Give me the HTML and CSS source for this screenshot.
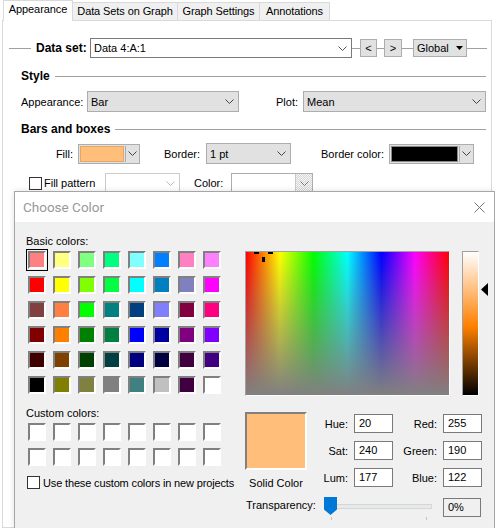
FILE: index.html
```html
<!DOCTYPE html>
<html lang="en">

<head>
    <meta charset="UTF-8">
    <title>Appearance - Choose Color</title>
    <link rel="stylesheet" href="styles.css">
</head>

<body>
    <div class="tabs">
        <div class="tab active tab-appearance">Appearance</div>
        <div class="tab tab-datasets">Data Sets on Graph</div>
        <div class="tab tab-graph">Graph Settings</div>
        <div class="tab tab-notes">Annotations</div>
    </div>

    <div class="panel">
        <div class="dataset-row">
            <span class="rule lead"></span>
            <span class="ds-label">Data set:</span>
            <div class="combo ds">
                <span>Data 4:A:1</span>
                <span class="chev"><svg width="9" height="5" viewBox="0 0 9 5"><path d="M0.5 0.5L4.5 4.5L8.5 0.5" fill="none" stroke="#555"/></svg></span>
            </div>
            <span class="rule w8"></span>
            <button class="navbtn">&lt;</button>
            <span class="rule w7"></span>
            <button class="navbtn">&gt;</button>
            <span class="rule w11"></span>
            <button class="globalbtn">Global <svg width="7" height="4" viewBox="0 0 7 4"><path d="M0 0H7L3.5 4Z" fill="#000"/></svg></button>
            <span class="rule w20"></span>
        </div>

        <div class="section-head head-style">
            <span>Style</span>
            <span class="rule fill"></span>
        </div>

        <div class="row row-appearance">
            <span class="lbl lbl-appearance">Appearance:</span>
            <div class="combo gray w152">
                <span>Bar</span>
                <span class="chev"><svg width="9" height="5" viewBox="0 0 9 5"><path d="M0.5 0.5L4.5 4.5L8.5 0.5" fill="none" stroke="#444"/></svg></span>
            </div>
            <span class="lbl lbl-plot">Plot:</span>
            <div class="combo gray w183">
                <span>Mean</span>
                <span class="chev"><svg width="9" height="5" viewBox="0 0 9 5"><path d="M0.5 0.5L4.5 4.5L8.5 0.5" fill="none" stroke="#444"/></svg></span>
            </div>
        </div>

        <div class="section-head head-bars">
            <span>Bars and boxes</span>
            <span class="rule fill"></span>
        </div>

        <div class="row row-fill">
            <span class="lbl right lbl-fill">Fill:</span>
            <div class="colorcombo w62">
                <span class="sw sw-fill"></span>
                <span class="drop"><svg width="9" height="5" viewBox="0 0 9 5"><path d="M0.5 0.5L4.5 4.5L8.5 0.5" fill="none" stroke="#444"/></svg></span>
            </div>
            <span class="lbl right lbl-border">Border:</span>
            <div class="combo gray w85">
                <span>1 pt</span>
                <span class="chev"><svg width="9" height="5" viewBox="0 0 9 5"><path d="M0.5 0.5L4.5 4.5L8.5 0.5" fill="none" stroke="#444"/></svg></span>
            </div>
            <span class="lbl right lbl-bcolor">Border color:</span>
            <div class="colorcombo w85">
                <span class="sw sw-black"></span>
                <span class="drop"><svg width="9" height="5" viewBox="0 0 9 5"><path d="M0.5 0.5L4.5 4.5L8.5 0.5" fill="none" stroke="#444"/></svg></span>
            </div>
        </div>

        <div class="row row-pattern">
            <span class="chk"></span>
            <span class="lbl lbl-pattern">Fill pattern</span>
            <div class="combo disabled w75">
                <span></span>
                <span class="chev"><svg width="9" height="5" viewBox="0 0 9 5"><path d="M0.5 0.5L4.5 4.5L8.5 0.5" fill="none" stroke="#bbb"/></svg></span>
            </div>
            <span class="lbl lbl-color">Color:</span>
            <div class="combo hatch w82">
                <span></span>
                <span class="drop-hatch"><svg width="9" height="5" viewBox="0 0 9 5"><path d="M0.5 0.5L4.5 4.5L8.5 0.5" fill="none" stroke="#777"/></svg></span>
            </div>
        </div>
    </div>

    <!-- Choose Color window over the panel -->
    <div class="dialog">
        <div class="dlg-title">
            <span>Choose Color</span>
            <svg class="close" width="11" height="11" viewBox="0 0 11 11"><path d="M0.5 0.5L10.5 10.5M10.5 0.5L0.5 10.5" stroke="#777" stroke-width="1"/></svg>
        </div>
        <div class="dlg-body">
            <div class="left-col">
                <div class="cap">Basic colors:</div>
                <div class="swatches basic">
                    <i class="selected" style="background:#ff8080"></i>
                    <i style="background:#ffff80"></i>
                    <i style="background:#80ff80"></i>
                    <i style="background:#00ff80"></i>
                    <i style="background:#80ffff"></i>
                    <i style="background:#0080ff"></i>
                    <i style="background:#ff80c0"></i>
                    <i style="background:#ff80ff"></i>

                    <i style="background:#ff0000"></i>
                    <i style="background:#ffff00"></i>
                    <i style="background:#80ff00"></i>
                    <i style="background:#00ff40"></i>
                    <i style="background:#00ffff"></i>
                    <i style="background:#0080c0"></i>
                    <i style="background:#8080c0"></i>
                    <i style="background:#ff00ff"></i>

                    <i style="background:#804040"></i>
                    <i style="background:#ff8040"></i>
                    <i style="background:#00ff00"></i>
                    <i style="background:#008080"></i>
                    <i style="background:#004080"></i>
                    <i style="background:#8080ff"></i>
                    <i style="background:#800040"></i>
                    <i style="background:#ff0080"></i>

                    <i style="background:#800000"></i>
                    <i style="background:#ff8000"></i>
                    <i style="background:#008000"></i>
                    <i style="background:#008040"></i>
                    <i style="background:#0000ff"></i>
                    <i style="background:#0000a0"></i>
                    <i style="background:#800080"></i>
                    <i style="background:#8000ff"></i>

                    <i style="background:#400000"></i>
                    <i style="background:#804000"></i>
                    <i style="background:#004000"></i>
                    <i style="background:#004040"></i>
                    <i style="background:#000080"></i>
                    <i style="background:#000040"></i>
                    <i style="background:#400040"></i>
                    <i style="background:#400080"></i>

                    <i style="background:#000000"></i>
                    <i style="background:#808000"></i>
                    <i style="background:#808040"></i>
                    <i style="background:#808080"></i>
                    <i style="background:#408080"></i>
                    <i style="background:#c0c0c0"></i>
                    <i style="background:#400040"></i>
                    <i style="background:#ffffff"></i>
                </div>

                <div class="cap cap-custom">Custom colors:</div>
                <div class="swatches custom">
                    <i></i><i></i><i></i><i></i><i></i><i></i><i></i><i></i>
                    <i></i><i></i><i></i><i></i><i></i><i></i><i></i><i></i>
                </div>

                <label class="use-custom"><span class="chk"></span>Use these custom colors in new projects</label>
            </div>

            <div class="right-col">
                <div class="picker">
                    <div class="spectrum">
                        <span class="mark m-left"></span>
                        <span class="mark m-right"></span>
                        <span class="mark m-down"></span>
                    </div>
                    <div class="lumbar"></div>
                    <svg class="lum-arrow" width="7" height="13" viewBox="0 0 7 13"><path d="M7 0V13L0 6.5Z" fill="#000"/></svg>
                </div>

                <div class="values">
                    <div class="solid">
                        <div class="solid-box"></div>
                        <div class="solid-cap">Solid Color</div>
                    </div>
                    <div class="fields">
                        <span class="flbl">Hue:</span><span class="field">20</span>
                        <span class="flbl">Red:</span><span class="field">255</span>
                        <span class="flbl">Sat:</span><span class="field">240</span>
                        <span class="flbl">Green:</span><span class="field">190</span>
                        <span class="flbl">Lum:</span><span class="field">177</span>
                        <span class="flbl">Blue:</span><span class="field">122</span>
                    </div>
                </div>

                <div class="trans-row">
                    <span class="trans-lbl">Transparency:</span>
                    <div class="slider">
                        <span class="track"></span>
                        <svg class="thumb" width="13" height="18" viewBox="0 0 13 18"><path d="M0 0H13V12.5L6.5 18L0 12.5Z" fill="#0078d7"/></svg>
                        <span class="tick t1"></span>
                        <span class="tick t2"></span>
                    </div>
                    <span class="pct">0%</span>
                </div>
            </div>
        </div>
    </div>
</body>

</html>
```

FILE: styles.css
```css
body {
    margin: 0;
    width: 495px;
    height: 528px;
    overflow: hidden;
    position: relative;
    background: #fff;
    font-family: "Liberation Sans", Arial, sans-serif;
    font-size: 11px;
    color: #000;
}

/* tab strip */
.tabs {
    display: flex;
    align-items: flex-end;
    height: 20px;
    padding-left: 3px;
}

.tab {
    box-sizing: border-box;
    height: 18px;
    line-height: 16px;
    text-align: center;
    border: 1px solid #d9d9d9;
    border-bottom: none;
    background: #f0f0f0;
    margin-left: -1px;
    white-space: nowrap;
    letter-spacing: -0.1px;
}

.tab.active {
    background: #fff;
    height: 21px;
    line-height: 17px;
    margin-bottom: -1px;
    margin-left: 0;
    position: relative;
    z-index: 1;
}

.tab-appearance { width: 70px; }
.tab-datasets { width: 106px; }
.tab-graph { width: 83px; }
.tab-notes { width: 71px; }

.panel {
    box-sizing: border-box;
    margin-left: 2px;
    width: 490px;
    height: 508px;
    border: 1px solid #d9d9d9;
    padding-top: 17px;
}

.rule {
    height: 1px;
    background: #a0a0a0;
    flex: none;
}

.rule.lead { margin-left: 6px; width: 22px; }
.rule.w8 { width: 8px; }
.rule.w7 { width: 7px; }
.rule.w11 { width: 11px; }
.rule.w20 { width: 20px; }
.rule.fill { flex: 1; margin-left: 5px; margin-right: 5px; }

.dataset-row {
    display: flex;
    align-items: center;
    height: 20px;
}

.ds-label {
    font-weight: bold;
    font-size: 12px;
    margin-left: 5px;
    width: 54px;
}

/* combo boxes */
.combo {
    box-sizing: border-box;
    display: flex;
    align-items: center;
    height: 20px;
    border: 1px solid #7a7a7a;
    background: #fff;
    padding-left: 3px;
    flex: none;
}

.combo .chev {
    margin-left: auto;
    width: 17px;
    display: flex;
    justify-content: center;
}

.combo.ds { width: 262px; }

.combo.gray {
    background: #e1e1e1;
    border-color: #adadad;
    height: 21px;
}

.combo.disabled { border-color: #cccccc; }

.combo.hatch {
    border-color: #adadad;
    padding: 0;
}

.drop-hatch {
    margin-left: auto;
    width: 16px;
    height: 100%;
    display: flex;
    align-items: center;
    justify-content: center;
    border-left: 1px solid #c8c8c8;
    background: repeating-conic-gradient(#d6d6d6 0 25%, #f6f6f6 0 50%) 0 0 / 2px 2px;
}

.w62 { width: 62px; }
.w75 { width: 75px; }
.w82 { width: 82px; }
.w85 { width: 85px; }
.w152 { width: 152px; }
.w183 { width: 183px; }

.navbtn,
.globalbtn {
    box-sizing: border-box;
    height: 18px;
    padding: 0;
    border: 1px solid #adadad;
    background: #e1e1e1;
    font-family: inherit;
    font-size: 11px;
    color: #000;
    flex: none;
}

.navbtn { width: 17px; }
.navbtn + .rule + .navbtn { width: 18px; }

.globalbtn {
    width: 54px;
    display: flex;
    align-items: center;
    gap: 7px;
    padding-left: 3px;
}

.section-head {
    display: flex;
    align-items: center;
    margin-left: 18px;
    height: 14px;
    font-weight: bold;
    font-size: 12px;
}

.head-style { margin-top: 11px; }
.head-bars { margin-top: 10px; }

.row {
    display: flex;
    align-items: center;
    margin-left: 18px;
}

.row-appearance { margin-top: 8px; }
.row-fill { margin-top: 7px; }
.row-pattern { margin-top: 9px; margin-left: 26px; }

.lbl { flex: none; }
.lbl.right { text-align: right; }
.lbl-appearance { width: 66px; }
.lbl-plot { width: 27px; margin-left: 37px; }
.lbl-fill { width: 52px; margin-right: 5px; }
.lbl-border { width: 60px; margin-right: 6px; }
.lbl-bcolor { width: 93px; margin-right: 5px; }
.lbl-pattern { width: 59px; margin-left: 2px; margin-right: 2px; }
.lbl-color { width: 37px; margin-left: 14px; }

/* swatch + button combos */
.colorcombo {
    box-sizing: border-box;
    display: flex;
    height: 20px;
    border: 1px solid #adadad;
    background: #e1e1e1;
    padding: 1px;
    flex: none;
}

.colorcombo .sw {
    flex: none;
    border: 1px solid #888;
}

.sw-fill { width: 42px; background: #ffbe7a; border-color: #e0a86c !important; }
.sw-black { width: 65px; background: #000; }

.colorcombo .drop {
    flex: 1;
    display: flex;
    align-items: center;
    justify-content: center;
    border-left: 1px solid #adadad;
    margin-left: 1px;
}

.chk {
    box-sizing: border-box;
    display: inline-block;
    width: 13px;
    height: 13px;
    border: 1px solid #333;
    background: #fff;
    flex: none;
}

/* dialog */
.dialog {
    position: absolute;
    left: 14px;
    top: 191px;
    width: 481px;
    bottom: 0;
    box-sizing: border-box;
    border: 1px solid #a6a6a6;
    border-bottom: none;
    background: #f0f0f0;
    box-shadow: 0 0 6px rgba(0, 0, 0, 0.12);
}

.dlg-title {
    display: flex;
    align-items: center;
    height: 30px;
    background: #fff;
    padding-left: 8px;
    font-family: Roboto, "Liberation Sans", sans-serif;
    font-size: 13.5px;
    color: #999;
}

.dlg-title .close {
    margin-left: auto;
    margin-right: 9px;
}

.dlg-body {
    display: flex;
    padding-top: 12px;
}

.left-col {
    width: 219px;
    padding-left: 11px;
    flex: none;
}

.cap {
    height: 14px;
    line-height: 14px;
}

.cap-custom { margin-top: 12px; }

.swatches {
    display: grid;
    grid-template-columns: repeat(8, 18px);
    grid-auto-rows: 18px;
    gap: 7px;
    margin-top: 3px;
    margin-left: 2px;
}

.swatches i {
    box-sizing: border-box;
    border: 2px solid;
    border-color: #808080 #fff #fff #808080;
    background: #fff;
}

.swatches i.selected {
    outline: 1px solid #000;
    outline-offset: 1px;
}

.use-custom {
    display: flex;
    align-items: center;
    gap: 3px;
    margin-top: 10px;
    margin-left: 1px;
    letter-spacing: -0.15px;
}

.right-col {
    margin-top: 17px;
    flex: none;
}

.picker {
    display: flex;
    align-items: flex-start;
}

.spectrum {
    position: relative;
    box-sizing: border-box;
    width: 205px;
    height: 145px;
    border: 1px solid;
    border-color: #a0a0a0 #fff #fff #a0a0a0;
    background:
        linear-gradient(to bottom, rgba(128, 128, 128, 0), #808080),
        linear-gradient(to right, #f00 0%, #ff0 16.7%, #0f0 33.3%, #0ff 50%, #00f 66.7%, #f0f 83.3%, #f00 100%);
}

.mark {
    position: absolute;
    background: #000;
}

.m-left { left: 8px; top: 0; width: 5px; height: 2px; }
.m-right { left: 22px; top: 0; width: 5px; height: 2px; }
.m-down { left: 16px; top: 5px; width: 3px; height: 5px; }

.lumbar {
    box-sizing: border-box;
    width: 17px;
    height: 145px;
    margin-left: 12px;
    border: 1px solid;
    border-color: #a0a0a0 #fff #fff #a0a0a0;
    background: linear-gradient(to bottom, #fff 0%, #ff8000 52%, #000 100%);
}

.lum-arrow {
    margin-left: 2px;
    margin-top: 32px;
}

.values {
    display: flex;
    margin-top: 16px;
}

.solid {
    width: 62px;
    flex: none;
}

.solid-box {
    box-sizing: border-box;
    height: 58px;
    border: 2px solid;
    border-color: #808080 #fff #fff #808080;
    background: #ffbe7a;
}

.solid-cap {
    margin-top: 6px;
    text-align: center;
    line-height: 14px;
}

.fields {
    display: grid;
    grid-template-columns: 41px 39px 38px 39px;
    grid-auto-rows: 19px;
    column-gap: 6px;
    row-gap: 8px;
    margin-top: 2px;
    align-items: center;
}

.flbl { text-align: right; }

.field {
    box-sizing: border-box;
    height: 19px;
    line-height: 17px;
    border: 1px solid #7a7a7a;
    background: #fff;
    padding-left: 4px;
}

.trans-row {
    display: flex;
    align-items: flex-start;
    margin-top: 7px;
}

.trans-lbl {
    width: 78px;
    margin-left: 1px;
    margin-top: 2px;
    flex: none;
}

.slider {
    position: relative;
    width: 108px;
    height: 23px;
    flex: none;
}

.track {
    position: absolute;
    left: 6px;
    right: 0;
    top: 7px;
    height: 3px;
    background: #e7eaea;
    border: 1px solid #d6d6d6;
}

.thumb {
    position: absolute;
    left: 0;
    top: 0;
}

.tick {
    position: absolute;
    top: 20px;
    width: 1px;
    height: 3px;
    background: #c4c4c4;
}

.t1 { left: 7px; }
.t2 { left: 102px; }

.pct {
    box-sizing: border-box;
    width: 38px;
    height: 19px;
    line-height: 17px;
    margin-left: 11px;
    margin-top: 1px;
    padding-left: 4px;
    border: 1px solid #7a7a7a;
    background: #f0f0f0;
}
```
